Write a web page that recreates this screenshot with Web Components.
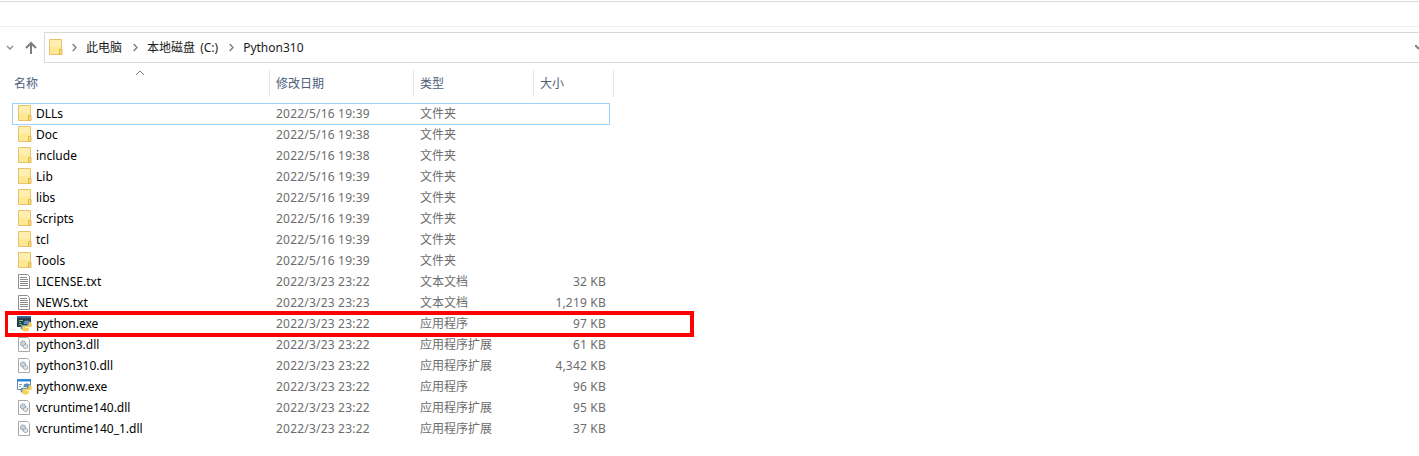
<!DOCTYPE html>
<html lang="zh-CN">
<head>
<meta charset="utf-8">
<title>Python310</title>
<style>
html,body{margin:0;background:#fff;}
body{font:12px "Noto Sans","Noto Sans CJK SC",sans-serif;color:#000;overflow:hidden;}
</style>
</head>
<body>
<file-explorer>
	<address-bar>
		<path-crumb>此电脑</path-crumb>
		<path-crumb>本地磁盘 (C:)</path-crumb>
		<path-crumb>Python310</path-crumb>
	</address-bar>
	<list-header></list-header>
	<file-row icon="folder" date="2022/5/16 19:39" type="文件夹" selected>DLLs</file-row>
	<file-row icon="folder" date="2022/5/16 19:38" type="文件夹">Doc</file-row>
	<file-row icon="folder" date="2022/5/16 19:38" type="文件夹">include</file-row>
	<file-row icon="folder" date="2022/5/16 19:39" type="文件夹">Lib</file-row>
	<file-row icon="folder" date="2022/5/16 19:39" type="文件夹">libs</file-row>
	<file-row icon="folder" date="2022/5/16 19:39" type="文件夹">Scripts</file-row>
	<file-row icon="folder" date="2022/5/16 19:39" type="文件夹">tcl</file-row>
	<file-row icon="folder" date="2022/5/16 19:39" type="文件夹">Tools</file-row>
	<file-row icon="text" date="2022/3/23 23:22" type="文本文档" size="32 KB">LICENSE.txt</file-row>
	<file-row icon="text" date="2022/3/23 23:23" type="文本文档" size="1,219 KB">NEWS.txt</file-row>
	<file-row icon="python" date="2022/3/23 23:22" type="应用程序" size="97 KB" marked>python.exe</file-row>
	<file-row icon="dll" date="2022/3/23 23:22" type="应用程序扩展" size="61 KB">python3.dll</file-row>
	<file-row icon="dll" date="2022/3/23 23:22" type="应用程序扩展" size="4,342 KB">python310.dll</file-row>
	<file-row icon="pythonw" date="2022/3/23 23:22" type="应用程序" size="96 KB">pythonw.exe</file-row>
	<file-row icon="dll" date="2022/3/23 23:22" type="应用程序扩展" size="95 KB">vcruntime140.dll</file-row>
	<file-row icon="dll" date="2022/3/23 23:22" type="应用程序扩展" size="37 KB">vcruntime140_1.dll</file-row>
</file-explorer>
<script>
'use strict';

// the two halves of the python logo, the yellow one is the blue one turned around
const SNAKE = 'M10.6 6.5c-2 0-3 .7-3 2V10H11v.7H6.6C5 10.7 4.5 11.7 4.5 13.2s.7 2.5 2 2.5h1.2V14c0-1 .8-1.8 2-1.8h3c1 0 1.6-.7 1.6-1.6V8.5c0-1-1-2-2.8-2z';
const SNAKES = '<path d="'+SNAKE+'" fill="#5a8db8"/><path d="'+SNAKE+'" fill="#f6cf57" transform="rotate(180 10.2 12)"/>';
const FOLDER_SVG = '<path d="M.5 1.5h12v15H.5z" fill="#ffe892" stroke="#e6c26a"/><path d="M1 2h11v7H1z" fill="#ffeeb0"/><path d="M10.5 11.5h2.5v5h-2.5z" fill="#fbdc7c" stroke="#e0b64e"/>';
const ICONS = {
	folder: '<g transform="translate(2)">'+FOLDER_SVG+'</g>',
	text: '<path d="M2.5 2.5h9l2 2v12h-11z" fill="#fff" stroke="#8f8f8f"/><path d="M4 5.5h7M4 7.5h8M4 9.5h8M4 11.5h8M4 13.5h8" stroke="#8a8a8a"/>',
	dll: '<path d="M2.5 2.5h9l2 2v12h-11z" fill="#fff" stroke="#a8a8a8"/><circle cx="7" cy="8.5" r="2.6" fill="#c9d3dc" stroke="#7f8b96" stroke-dasharray="1.5 .6"/><circle cx="9.6" cy="11.5" r="2.2" fill="#dde3e8" stroke="#87929c" stroke-dasharray="1.5 .6"/>',
	python: '<path d="M1 2h14v11H1z" fill="#2a3a48"/><path d="M1 2h14v2H1z" fill="#3a6a9c"/><path d="M3 6.5h4M3 8.5h2M3 10.5h3" stroke="#67c46a"/>'+SNAKES,
	pythonw: '<path d="M1.5 2.5h13v10h-13z" fill="#fff" stroke="#5f8db8"/><path d="M1 2h14v2.5H1z" fill="#2f86d6"/><path d="M3 7.5h3M3 9.5h2" stroke="#8aa0b5"/>'+SNAKES
};

class fileExplorer extends HTMLElement{
	constructor(){
		super();
		let shadow = this.attachShadow({mode:'open'});
		shadow.innerHTML = `
<style>
:host { display:block; width:1419px; height:456px; background:#fff; }
.ribbon { height:24px; margin-top:1px; border-top:1px solid #dcdcdc; border-bottom:1px solid #eeeeee; margin-bottom:5px; }
</style>
<div class="ribbon"></div>
<slot></slot>`;
	}
}

class addressBar extends HTMLElement{
	constructor(){
		super();
		let shadow = this.attachShadow({mode:'open'});
		shadow.innerHTML = `
<style>
:host { display:flex; height:31px; align-items:stretch; color:#1a1a1a; }
nav { width:44px; flex:none; display:flex; align-items:center; }
nav svg { display:block; }
.box { flex:1; display:flex; align-items:center; border:1px solid #d9d9d9; border-right:0; padding:0 0 1px 4px; position:relative; word-spacing:2px; }
.folder { margin-right:-2px; }
.end { position:absolute; right:0; top:12px; }
</style>
<nav>
	<svg width="44" height="31" viewBox="0 0 44 31"><path d="M7 14l3 3 3-3" fill="none" stroke="#8a8a8a" stroke-width="1.4"/><path d="M31 22V11M26 16l5-5 5 5" fill="none" stroke="#7d7d7d" stroke-width="2"/></svg>
</nav>
<div class="box">
	<svg class="folder" width="14" height="18" viewBox="0 0 14 18">${FOLDER_SVG}</svg>
	<slot></slot>
	<svg class="end" width="4" height="6" viewBox="0 0 4 6"><path d="M0 0l4 4" stroke="#808080" stroke-width="2"/></svg>
</div>`;
	}
}

class pathCrumb extends HTMLElement{
	constructor(){
		super();
		let shadow = this.attachShadow({mode:'open'});
		shadow.innerHTML = `
<style>
:host { display:flex; align-items:center; }
svg { margin:0 9px 0 11px; display:block; }
</style>
<svg width="5" height="9" viewBox="0 0 5 9"><path d="M.7 1l3.3 3.5L.7 8" fill="none" stroke="#7b7b7b" stroke-width="1.3"/></svg>
<slot></slot>`;
	}
}

class listHeader extends HTMLElement{
	constructor(){
		super();
		let shadow = this.attachShadow({mode:'open'});
		shadow.innerHTML = `
<style>
:host { display:grid; grid-template-columns:270px 144px 120px 80px; height:27px; margin:7px 0 6px; color:#4c607a; }
div { border-right:1px solid #e5e5e5; padding-left:6px; line-height:27px; }
.name { padding-left:14px; position:relative; }
svg { position:absolute; left:135px; top:0; }
</style>
<div class="name">名称<svg width="10" height="6" viewBox="0 0 10 6"><path d="M1 5l4-4 4 4" fill="none" stroke="#7b7b7b"/></svg></div>
<div>修改日期</div>
<div>类型</div>
<div>大小</div>`;
	}
}

class fileRow extends HTMLElement{
	constructor(){
		super();
		let shadow = this.attachShadow({mode:'open'});
		let icon = ICONS[this.getAttribute('icon')];
		shadow.innerHTML = `
<style>
:host { display:grid; grid-template-columns:263px 144px 1fr auto; align-items:center; box-sizing:border-box; width:598px; height:22px; margin:0 0 -1px 12px; padding:0 3px 2px 0; border:1px solid transparent; color:#6d6d6d; position:relative; }
:host([selected]) { border-color:#99d1ff; }
:host([marked])::after { content:""; position:absolute; left:-8px; top:-3px; width:682px; height:18px; border:solid #f00; border-width:4px 4px 4px 3px; }
.name { display:flex; align-items:center; gap:4px; padding-left:3px; color:#000; }
.num { letter-spacing:.2px; }
svg { display:block; flex:none; }
</style>
<div class="name"><svg width="16" height="18" viewBox="0 0 16 18">${icon}</svg><slot></slot></div>
<div class="num">${this.getAttribute('date')}</div>
<div>${this.getAttribute('type')}</div>
<div class="num">${this.getAttribute('size')||''}</div>`;
	}
}

window.customElements.define('file-explorer',fileExplorer);
window.customElements.define('address-bar',addressBar);
window.customElements.define('path-crumb',pathCrumb);
window.customElements.define('list-header',listHeader);
window.customElements.define('file-row',fileRow);
</script>
</body>
</html>
